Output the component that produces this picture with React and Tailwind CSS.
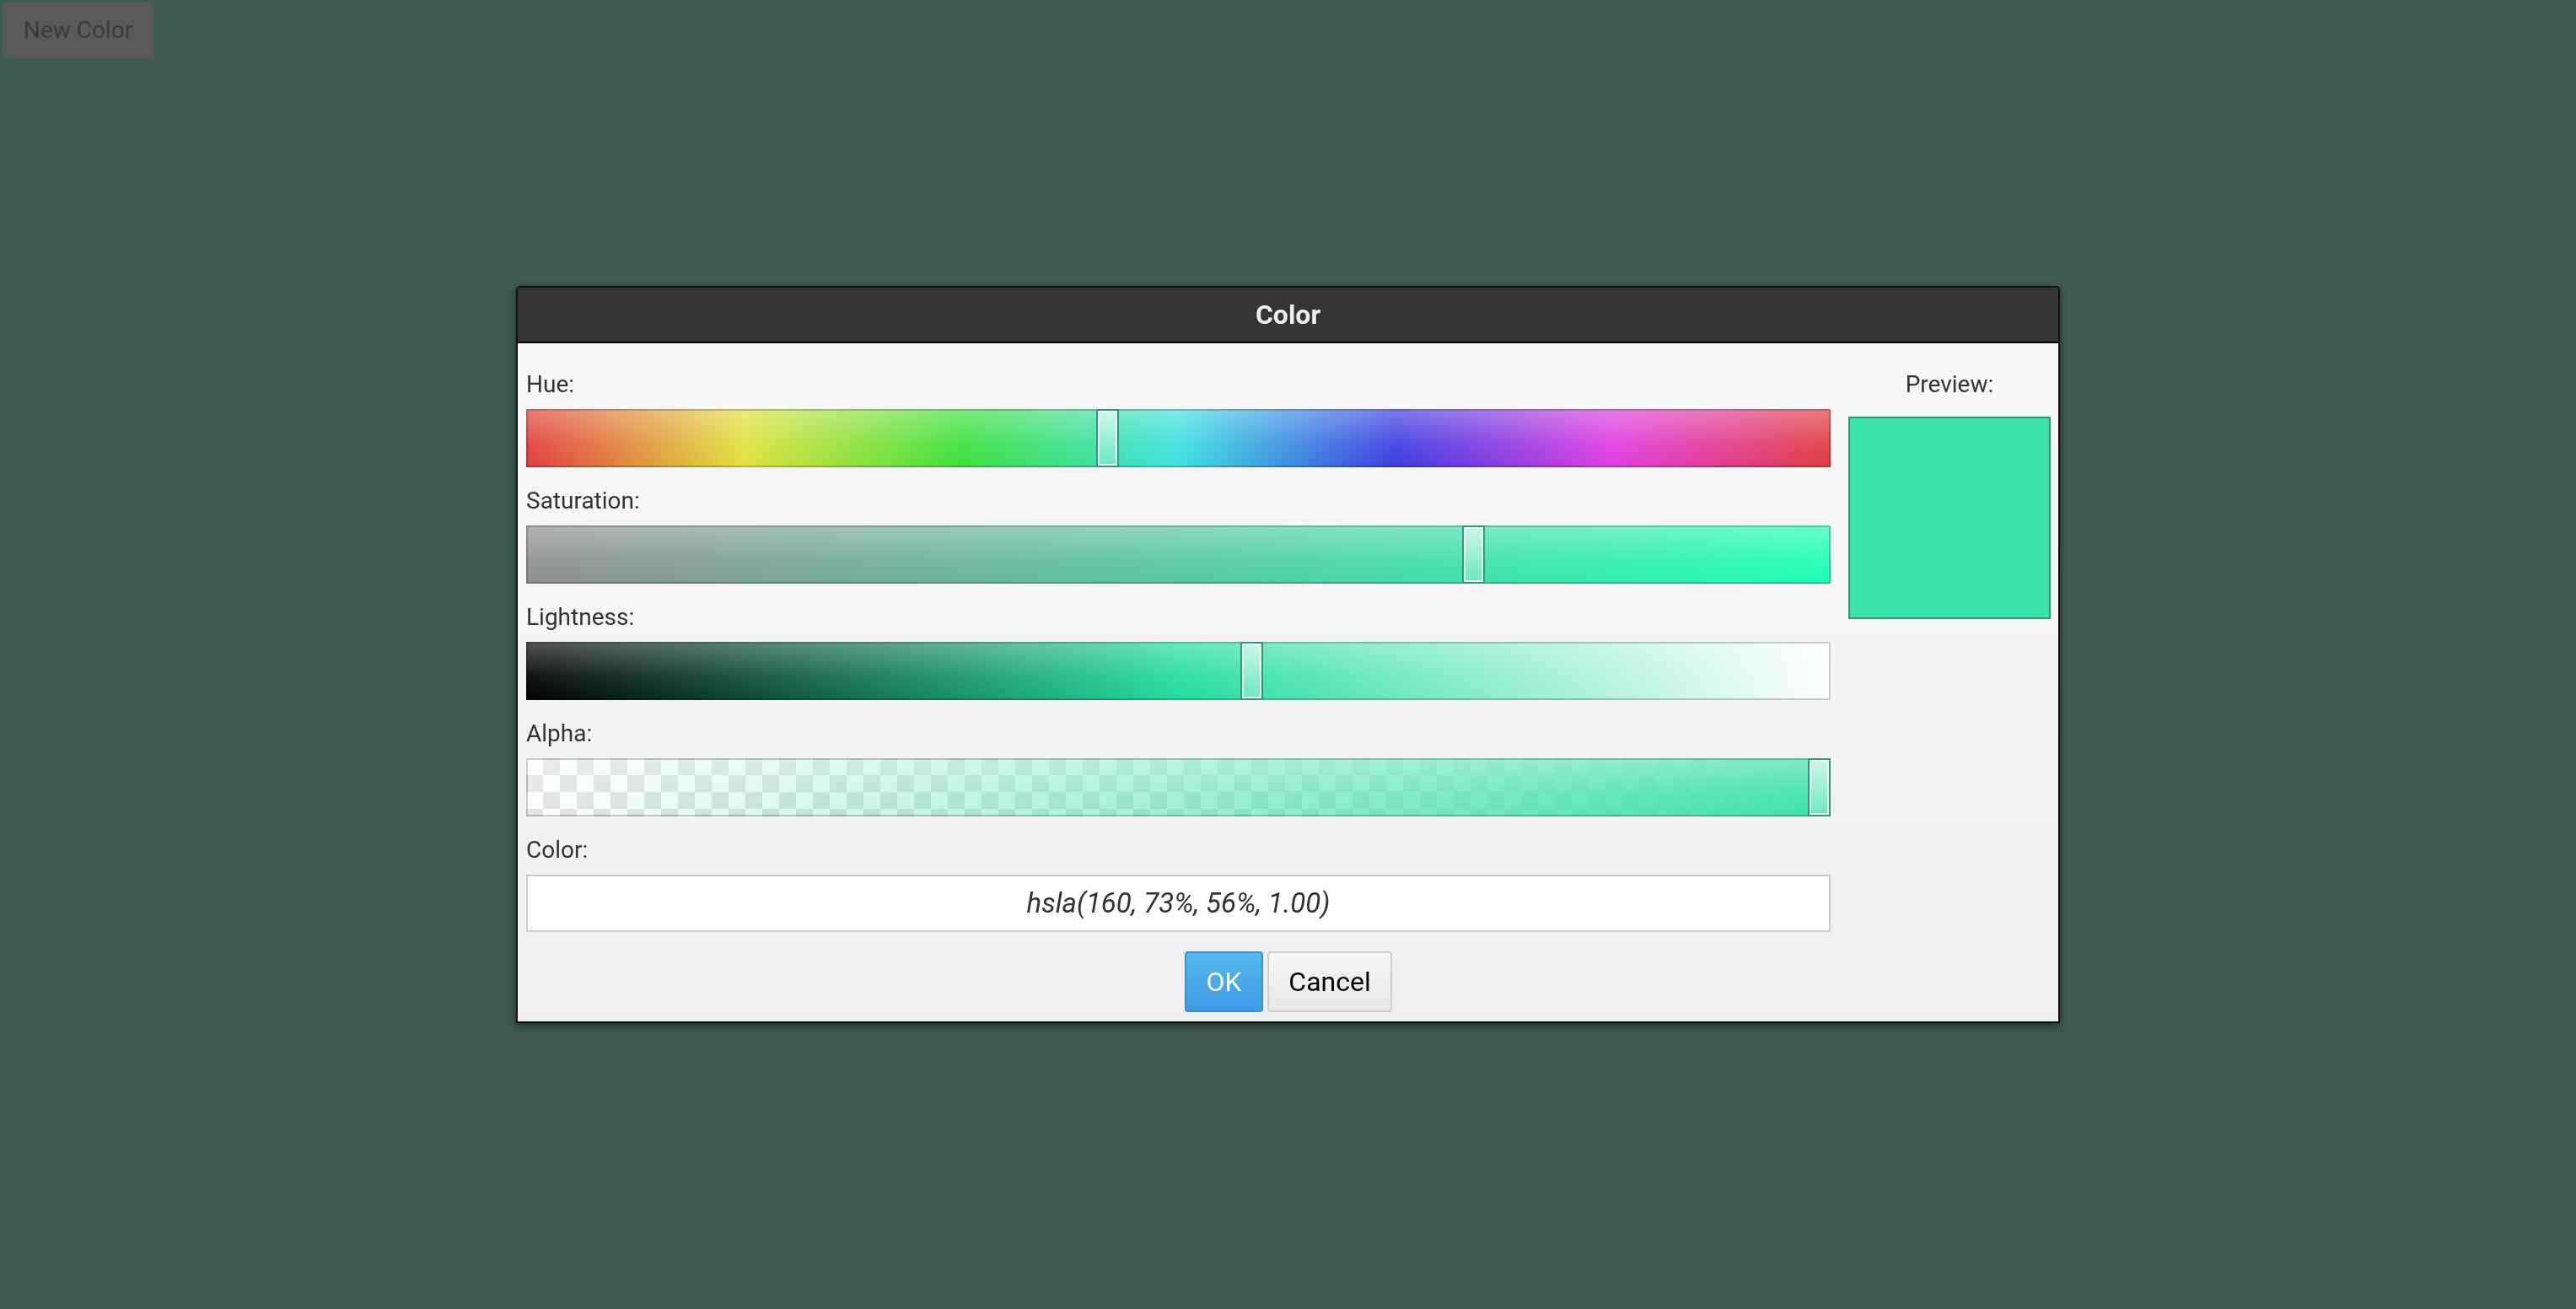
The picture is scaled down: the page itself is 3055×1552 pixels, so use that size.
import React from "react";

const H = 160, S = 73, L = 56, A = 1.0;
const HANDLE = 27;

const gloss = "linear-gradient(to bottom, rgba(255,255,255,0.32), rgba(255,255,255,0.08) 60%, rgba(255,255,255,0) 100%)";
const hsl = (h, s, l, a = 1) => `hsla(${h}, ${s}%, ${l}%, ${a})`;

const hueBg = `${gloss}, linear-gradient(to right, ${[0, 60, 120, 180, 240, 300, 360].map((h) => hsl(h, S, L)).join(", ")})`;
const satBg = `${gloss}, linear-gradient(to right, ${hsl(H, 0, L)}, ${hsl(H, 100, L)})`;
const litBg = `${gloss}, linear-gradient(to right, ${hsl(H, S, 0)}, ${hsl(H, S, 50)}, ${hsl(H, S, 100)})`;
const alphaBg = `${gloss}, linear-gradient(to right, ${hsl(H, S, L, 0)}, ${hsl(H, S, L, 1)}), repeating-conic-gradient(#e4e4e4 0% 25%, #ffffff 0% 50%)`;

function Bar({ bg, size, pct }) {
  return (
    <div className="relative h-[69px]">
      <div
        className="h-full border-2 border-black/20 bg-origin-border"
        style={{ backgroundImage: bg, backgroundSize: size }}
      />
      <div
        className="absolute top-0 bottom-0 w-[27px] border-2 border-[#2b9c76]"
        style={{ left: `calc(${pct} * (100% - ${HANDLE}px))` }}
      >
        <div className="h-full border-2 border-white/85 bg-gradient-to-b from-white/60 to-white/25" />
      </div>
    </div>
  );
}

function Row({ label, children }) {
  return (
    <div className="flex flex-col">
      <div className="text-[28px] leading-[33px] text-[#333333] mb-[13px]">{label}</div>
      {children}
    </div>
  );
}

export default function App() {
  const value = `hsla(${H}, ${S}%, ${L}%, ${A.toFixed(2)})`;
  return (
    <div className="relative h-screen w-full overflow-hidden bg-[#3f5a4f] font-['Roboto','Liberation_Sans',sans-serif]">
      <button className="m-[3px] flex h-[66px] w-[179px] items-center justify-center rounded-[5px] bg-[#5a5a5a] text-[28px] text-[#3a3a3a]">
        New Color
      </button>

      <div className="fixed inset-0 flex items-center justify-center">
        <div className="w-[1831px] rounded-t-[5px] border-2 border-[#111111] shadow-[0_3px_8px_rgba(0,0,0,0.55)]">
          <div className="flex h-[66px] items-center justify-center rounded-t-[3px] border-b-2 border-black bg-[#343434] text-[32px] font-bold text-[#eeeeee]">
            Color
          </div>
          <div className="bg-gradient-to-b from-[#f8f8f8] to-[#efefef] pl-[10px] pr-[9px] pt-[32px] pb-[11px]">
            <div className="flex gap-[21px]">
              <div className="flex flex-1 flex-col gap-[23px]">
                <Row label="Hue:">
                  <Bar bg={hueBg} size="auto" pct={H / 360} />
                </Row>
                <Row label="Saturation:">
                  <Bar bg={satBg} size="auto" pct={S / 100} />
                </Row>
                <Row label="Lightness:">
                  <Bar bg={litBg} size="auto" pct={L / 100 - 0.003} />
                </Row>
                <Row label="Alpha:">
                  <Bar bg={alphaBg} size="auto, auto, 40px 40px" pct={A} />
                </Row>
                <Row label="Color:">
                  <div className="flex h-[68px] items-center justify-center border-2 border-[#cccccc] bg-white text-[33px] italic text-[#333333]">
                    {value}
                  </div>
                </Row>
              </div>
              <div className="flex w-[240px] flex-col items-center">
                <div className="text-[28px] leading-[33px] text-[#333333]">Preview:</div>
                <div
                  className="mt-[22px] h-[240px] w-[240px] border-2 border-[#2b9c76]"
                  style={{ backgroundColor: value }}
                />
              </div>
            </div>
            <div className="mt-[23px] flex justify-center gap-[5px]">
              <button className="h-[72px] w-[93px] rounded-[4px] border-2 border-[#3a8fd6] bg-gradient-to-b from-[#55b8ee] to-[#3e9be4] text-[32px] text-white">
                OK
              </button>
              <button className="h-[72px] w-[148px] rounded-[4px] border-2 border-[#cfcfcf] bg-gradient-to-b from-[#f6f6f6] to-[#e8e8e8] text-[32px] text-black">
                Cancel
              </button>
            </div>
          </div>
        </div>
      </div>
    </div>
  );
}
